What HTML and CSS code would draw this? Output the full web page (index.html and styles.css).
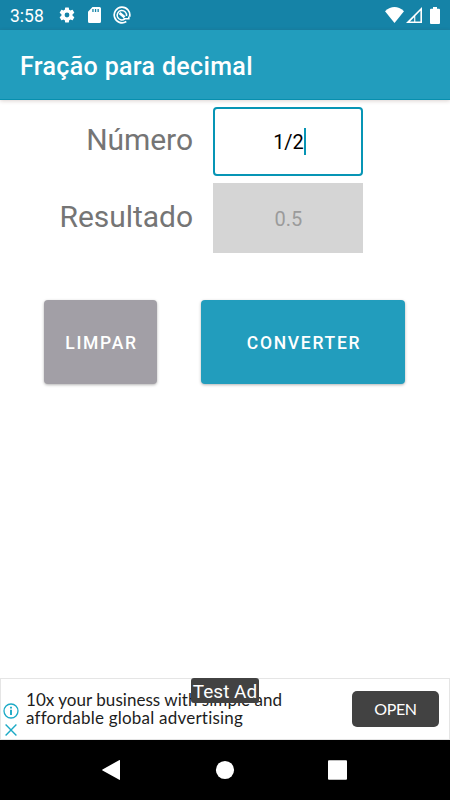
FILE: index.html
```html
<!DOCTYPE html>
<html lang="pt">
<head>
<meta charset="utf-8">
<title>Fração para decimal</title>
<link rel="stylesheet" href="styles.css">
</head>
<body>
<div class="screen">
  <div class="status">
    <span class="clock">3:58</span>
    <svg class="gear" width="18" height="18" viewBox="0 0 24 24"><path fill="#fff" d="M19.4 13a7.500 7.500 0 0 0 0-2l2.100-1.650a.5.5 0 0 0 .12-.64l-2-3.460a.5.5 0 0 0-.61-.22l-2.490 1a7.300 7.300 0 0 0-1.690-.98l-.38-2.650A.49.49 0 0 0 14 2h-4a.49.49 0 0 0-.49.42l-.38 2.650c-.61.25-1.170.59-1.690.98l-2.490-1a.49.49 0 0 0-.61.22l-2 3.460a.49.49 0 0 0 .12.64L4.570 11a7.900 7.900 0 0 0 0 2l-2.110 1.650a.5.5 0 0 0-.12.64l2 3.460c.12.22.39.3.61.22l2.490-1c.52.4 1.080.73 1.690.98l.38 2.650c.03.24.24.42.49.42h4c.25 0 .46-.18.49-.42l.38-2.650a7.700 7.700 0 0 0 1.690-.98l2.490 1c.23.09.49 0 .61-.22l2-3.460a.5.5 0 0 0-.12-.64zM12 15.200a3.200 3.200 0 1 1 0-6.400 3.200 3.200 0 0 1 0 6.400z"/></svg>
    <svg class="sd" width="13" height="16" viewBox="0 0 13 16"><path fill="#fff" fill-rule="evenodd" d="M4.500 0H11.500Q13 0 13 1.500V14.500Q13 16 11.500 16H1.500Q0 16 0 14.500V4.800zM4.300 2V5H5.600V2zM6.900 2V5H8.200V2zM9.500 2V5H10.800V2z"/></svg>
    <svg class="debug" width="18" height="18" viewBox="0 0 18 18" fill="none" stroke="#fff"><path stroke-width="1.700" d="M13.300 15.500A7.800 7.800 0 1 1 16.600 10.800"/><path stroke-width="1.500" d="M11.800 12.900A4.700 4.700 0 1 1 13.500 10"/><path stroke-width="2.800" d="M6.500 7L11.600 11.300"/><path stroke-width="1.600" d="M10.500 12.800H15.800V10.500"/></svg>
    <svg class="wifi" width="19" height="16" viewBox="0 0 19 16"><path fill="#fff" d="M0 4.200Q9.500-4 19 4.200L9.500 16z"/></svg>
    <svg class="signal" width="16" height="16" viewBox="0 0 16 16"><path fill="#fff" d="M16 0V16H0z"/><path fill="#1583a7" d="M4 14.400L8.200 10.200V14.400zM9.300 9V14.400H14.400V3.800z"/></svg>
    <svg class="battery" width="10" height="17" viewBox="0 0 10 17"><path fill="#fff" d="M3 0H7V1.800H9Q10 1.800 10 2.800V16Q10 17 9 17H1Q0 17 0 16V2.800Q0 1.800 1 1.800H3z"/></svg>
  </div>
  <header class="appbar"><h1>Fração para decimal</h1></header>
  <main class="content">
    <div class="form">
      <span class="label">Número</span>
      <div class="field active"><span>1/2</span><i class="caret"></i></div>
      <span class="label">Resultado</span>
      <div class="field result"><span>0.5</span></div>
    </div>
    <div class="actions">
      <button class="btn clear">LIMPAR</button>
      <button class="btn convert">CONVERTER</button>
    </div>
  </main>
  <section class="ad">
    <div class="adicons">
      <svg width="16" height="16" viewBox="0 0 16 16" fill="none" stroke="#1caac6"><circle cx="8" cy="8" r="7" stroke-width="1.300"/><path stroke-width="1.900" d="M8 3.700V5.500M8 6.700V12"/></svg>
      <svg width="16" height="16" viewBox="0 0 16 16" fill="none" stroke="#1caac6" stroke-width="1.400"><path d="M2.600 2.600L13.400 13.400M13.400 2.600L2.600 13.400"/></svg>
    </div>
    <div class="adtext"><div class="line1">10x your business with simple and</div><div class="line2">affordable global advertising</div></div>
    <button class="open">OPEN</button>
    <span class="testad">Test Ad</span>
  </section>
  <nav class="nav">
    <svg width="20" height="22" viewBox="0 0 20 22"><path fill="#fff" d="M17.500 1Q18 .8 18 1.500V20.500Q18 21.200 17.300 20.800L.5 11.600Q-.2 11 .5 10.400z"/></svg>
    <svg width="20" height="20" viewBox="0 0 20 20"><circle cx="10" cy="10" r="9.100" fill="#fff"/></svg>
    <svg width="20" height="20" viewBox="0 0 20 20"><rect x="0" y=".3" width="19" height="19.400" rx="1" fill="#fff"/></svg>
  </nav>
</div>
</body>
</html>
```
FILE: styles.css
```css
* { box-sizing: border-box; }
body { margin: 0; font-family: Roboto, sans-serif; background: #fff; }
svg { display: block; flex: none; }
button { border: 0; padding: 0; font-family: inherit; }
.screen { width: 450px; height: 800px; display: flex; flex-direction: column; overflow: hidden; }
.status { height: 30px; flex: none; display: flex; align-items: center; background: #1583a7; padding: 0 10px; color: #fff; }
.clock { width: 48px; font-size: 17.500px; line-height: 30px; padding-top: 2px; }
.sd { margin-left: 12px; }
.debug { margin-left: 12px; }
.wifi { margin-left: auto; }
.signal { margin-left: 2px; }
.battery { margin-left: 8px; }
.appbar { height: 70px; flex: none; display: flex; align-items: center; padding-left: 20px; background: #229dbd; border-bottom: 1px solid #078fae; box-shadow: 0 1px 4px rgba(70, 30, 20, .2); }
h1 { margin: 4px 0 0; font-size: 25px; line-height: 30px; font-weight: 500; letter-spacing: .34px; color: #fff; white-space: nowrap; }
.content { flex: 1; padding-top: 7px; }
.form { display: grid; grid-template-columns: 193px 150px; column-gap: 20px; grid-template-rows: 69px 70px; row-gap: 7px; }
.label { display: flex; align-items: center; justify-content: flex-end; font-size: 30px; letter-spacing: -.05px; color: #757575; padding-bottom: 4px; }
.field { display: flex; align-items: center; justify-content: center; font-size: 20px; color: #000; }
.active { border: 2px solid #0795b5; border-radius: 4px; padding-left: 1px; }
.caret { width: 2px; height: 27px; background: #0795b5; margin-right: -2px; }
.result { background: #d5d5d5; color: #9b9b9b; padding: 1px 0 0 1px; }
.actions { display: flex; padding: 47px 0 0 44px; gap: 44px; }
.btn { height: 84px; border-radius: 4px; font-size: 17.500px; font-weight: 500; color: #fff; letter-spacing: 1.700px; padding: 2px 0 0 2px; box-shadow: 0 1px 3px rgba(0, 0, 0, .3); }
.clear { width: 113px; background: #a29fa6; }
.convert { width: 204px; background: #229dbd; }
.ad { position: relative; height: 62px; flex: none; display: flex; align-items: center; border: 1px solid #e5e5e5; background: #fff; }
.adicons { width: 25px; padding: 22px 0 0 2px; display: flex; flex-direction: column; gap: 3px; }
.adtext { flex: 1; margin-top: -1px; font-family: Lato, sans-serif; font-size: 17px; line-height: 18px; letter-spacing: .04px; font-variant-ligatures: none; color: #1d1d1d; white-space: nowrap; }
.line2 { letter-spacing: .22px; }
.open { width: 87px; height: 36px; margin: -1px 10px 0 0; border-radius: 5px; background: #424242; color: #fff; font: 400 16px/36px Lato, sans-serif; letter-spacing: -.4px; }
.testad { position: absolute; left: 190px; top: -1px; width: 68px; height: 25px; line-height: 27px; font-size: 19px; text-align: center; border-radius: 3px; background: #424242; color: #fff; white-space: nowrap; }
.nav { height: 60px; flex: none; display: flex; align-items: center; justify-content: space-between; padding: 0 102px; background: #000; }
```
